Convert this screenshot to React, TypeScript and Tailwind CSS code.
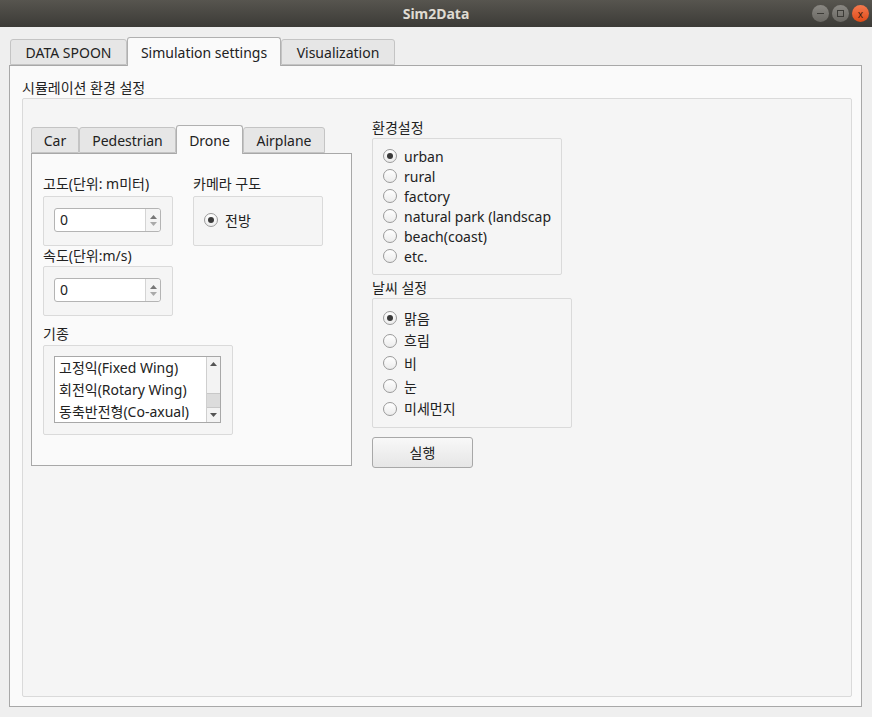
import React from 'react';

const FONT = '"Noto Sans", "Noto Sans CJK KR", sans-serif';

function Radio({ label, checked = false }: { label: string; checked?: boolean }) {
  return (
    <div className="flex items-center gap-[7px] h-[20px]">
      <span className="w-[14px] h-[14px] rounded-full border border-[#9a9a9a] bg-gradient-to-b from-white to-[#ececec] flex items-center justify-center shrink-0">
        {checked && <span className="w-[6px] h-[6px] rounded-full bg-[#3a3a3a]" />}
      </span>
      <span className="whitespace-nowrap">{label}</span>
    </div>
  );
}

function Group({ className, children }: { className: string; children?: React.ReactNode }) {
  return <div className={`border border-[#dadada] rounded-[2px] bg-[#f5f5f5] ${className}`}>{children}</div>;
}

function SpinBox() {
  return (
    <div className="ml-[10px] mt-[11px] w-[107px] h-[24px] bg-white border border-[#b4b4b4] rounded-[3px] flex">
      <span className="flex-1 pl-[5px] leading-[22px]">0</span>
      <div className="w-[15px] border-l border-[#d4d4d4] bg-[#f4f4f4] flex flex-col items-center justify-center gap-[3px] rounded-r-[3px]">
        <svg width="7" height="4" viewBox="0 0 7 4"><path d="M0 4 L3.5 0 L7 4Z" fill="#777" /></svg>
        <svg width="7" height="4" viewBox="0 0 7 4"><path d="M0 0 L3.5 4 L7 0Z" fill="#aaa" /></svg>
      </div>
    </div>
  );
}

function Tab({ label, active = false, w }: { label: string; active?: boolean; w: string }) {
  return active ? (
    <div className={`${w} h-[29px] -mb-px z-10 border border-b-0 border-[#b0b0b0] rounded-t-[3px] bg-[#fafafa] flex items-center justify-center`}>
      {label}
    </div>
  ) : (
    <div className={`${w} h-[26px] border border-[#c4c4c4] rounded-t-[3px] bg-[#e6e6e6] flex items-center justify-center`}>
      {label}
    </div>
  );
}

export default function App() {
  return (
    <div className="w-[872px] h-[717px] bg-[#efefef] flex flex-col overflow-hidden text-[14px] text-[#222]" style={{ fontFamily: FONT }}>
      {/* title bar */}
      <div className="h-[27px] shrink-0 bg-gradient-to-b from-[#57554f] to-[#3c3b37] flex items-center relative">
        <span className="flex-1 text-center text-[#dfdbd2] font-bold text-[14px]">Sim2Data</span>
        <div className="absolute right-[3px] top-[5px] flex gap-[3px]">
          <span className="w-[17px] h-[17px] rounded-full bg-gradient-to-b from-[#8a8883] to-[#6a6863] flex items-center justify-center">
            <span className="w-[7px] h-[1px] bg-[#3c3b37]" />
          </span>
          <span className="w-[17px] h-[17px] rounded-full bg-gradient-to-b from-[#8a8883] to-[#6a6863] flex items-center justify-center">
            <span className="w-[7px] h-[7px] border border-[#3c3b37]" />
          </span>
          <span className="w-[17px] h-[17px] rounded-full bg-gradient-to-b from-[#f4794d] to-[#de4a14] flex items-center justify-center text-[10px] text-[#3c1a0a] leading-none">
            x
          </span>
        </div>
      </div>

      {/* outer tab widget */}
      <div className="flex-1 flex flex-col pt-[10px] pl-[9px] pr-[10px] pb-[10px]">
        <div className="flex items-end h-[28px] pl-px">
          <Tab label="DATA SPOON" w="w-[117px]" />
          <Tab label="Simulation settings" active w="w-[154px]" />
          <Tab label="Visualization" w="w-[114px]" />
        </div>
        <div className="flex-1 flex flex-col border border-[#a8a8a8] bg-[#fafafa] pl-[12px] pr-[9px] pb-[9px] pt-[12px]">
          <div className="h-[20px] leading-[20px]">시뮬레이션 환경 설정</div>
          <Group className="flex-1 flex gap-[20px] pl-[8px] pt-[25px]">
            {/* inner tab widget */}
            <div className="w-[321px] flex flex-col">
              <div className="flex items-end h-[29px]">
                <Tab label="Car" w="w-[48px]" />
                <Tab label="Pedestrian" w="w-[97px]" />
                <Tab label="Drone" active w="w-[67px]" />
                <Tab label="Airplane" w="w-[82px]" />
              </div>
              <div className="h-[313px] border border-[#a8a8a8] bg-[#fafafa] pl-[11px] pt-[21px] flex gap-[20px]">
                <div className="flex flex-col w-[130px]">
                  <div className="h-[21px] leading-[18px] whitespace-nowrap">고도(단위: m미터)</div>
                  <Group className="w-[130px] h-[50px]">
                    <SpinBox />
                  </Group>
                  <div className="h-[20px] leading-[20px] whitespace-nowrap">속도(단위:m/s)</div>
                  <Group className="w-[130px] h-[50px]">
                    <SpinBox />
                  </Group>
                  <div className="h-[22px] mt-[7px] leading-[22px]">기종</div>
                  <Group className="w-[190px] h-[90px] shrink-0">
                    <div className="ml-[10px] mt-[10px] w-[167px] h-[67px] bg-white border border-[#a8a8a8] flex">
                      <div className="flex-1 pl-[4px] overflow-hidden">
                        <div className="h-[22px] leading-[22px] whitespace-nowrap">고정익(Fixed Wing)</div>
                        <div className="h-[22px] leading-[22px] whitespace-nowrap">회전익(Rotary Wing)</div>
                        <div className="h-[21px] leading-[22px] whitespace-nowrap overflow-hidden">동축반전형(Co-axual)</div>
                      </div>
                      <div className="w-[14px] border-l border-[#cfcfcf] bg-[#f3f3f3] flex flex-col">
                        <div className="h-[14px] flex items-center justify-center">
                          <svg width="7" height="4" viewBox="0 0 7 4"><path d="M0 4 L3.5 0 L7 4Z" fill="#555" /></svg>
                        </div>
                        <div className="flex-1 flex flex-col justify-end">
                          <div className="h-[15px] bg-[#dcdcdc] border-y border-[#c8c8c8]" />
                        </div>
                        <div className="h-[14px] flex items-center justify-center">
                          <svg width="7" height="4" viewBox="0 0 7 4"><path d="M0 0 L3.5 4 L7 0Z" fill="#555" /></svg>
                        </div>
                      </div>
                    </div>
                  </Group>
                </div>
                <div className="flex flex-col w-[130px]">
                  <div className="h-[21px] leading-[18px] whitespace-nowrap">카메라 구도</div>
                  <Group className="w-[130px] h-[50px] pl-[10px] pt-[13px]">
                    <Radio label="전방" checked />
                  </Group>
                </div>
              </div>
            </div>

            {/* right column */}
            <div className="flex flex-col w-[200px] -mt-[6px]">
              <div className="h-[20px] leading-[20px]">환경설정</div>
              <Group className="w-[190px] h-[137px] pl-[10px] pt-[7px] overflow-hidden">
                <div className="w-[168px] overflow-hidden">
                  <Radio label="urban" checked />
                  <Radio label="rural" />
                  <Radio label="factory" />
                  <Radio label="natural park (landscape)" />
                  <Radio label="beach(coast)" />
                  <Radio label="etc." />
                </div>
              </Group>
              <div className="h-[20px] mt-[3px] leading-[20px]">날씨 설정</div>
              <Group className="w-[200px] h-[130px] pl-[10px] pt-[9px] flex flex-col gap-[2.7px]">
                <Radio label="맑음" checked />
                <Radio label="흐림" />
                <Radio label="비" />
                <Radio label="눈" />
                <Radio label="미세먼지" />
              </Group>
              <button className="mt-[9px] w-[101px] h-[31px] border border-[#a8a8a8] rounded-[3px] bg-gradient-to-b from-[#f8f8f8] to-[#e6e6e6] text-[#222]">
                실행
              </button>
            </div>
          </Group>
        </div>
      </div>
    </div>
  );
}
